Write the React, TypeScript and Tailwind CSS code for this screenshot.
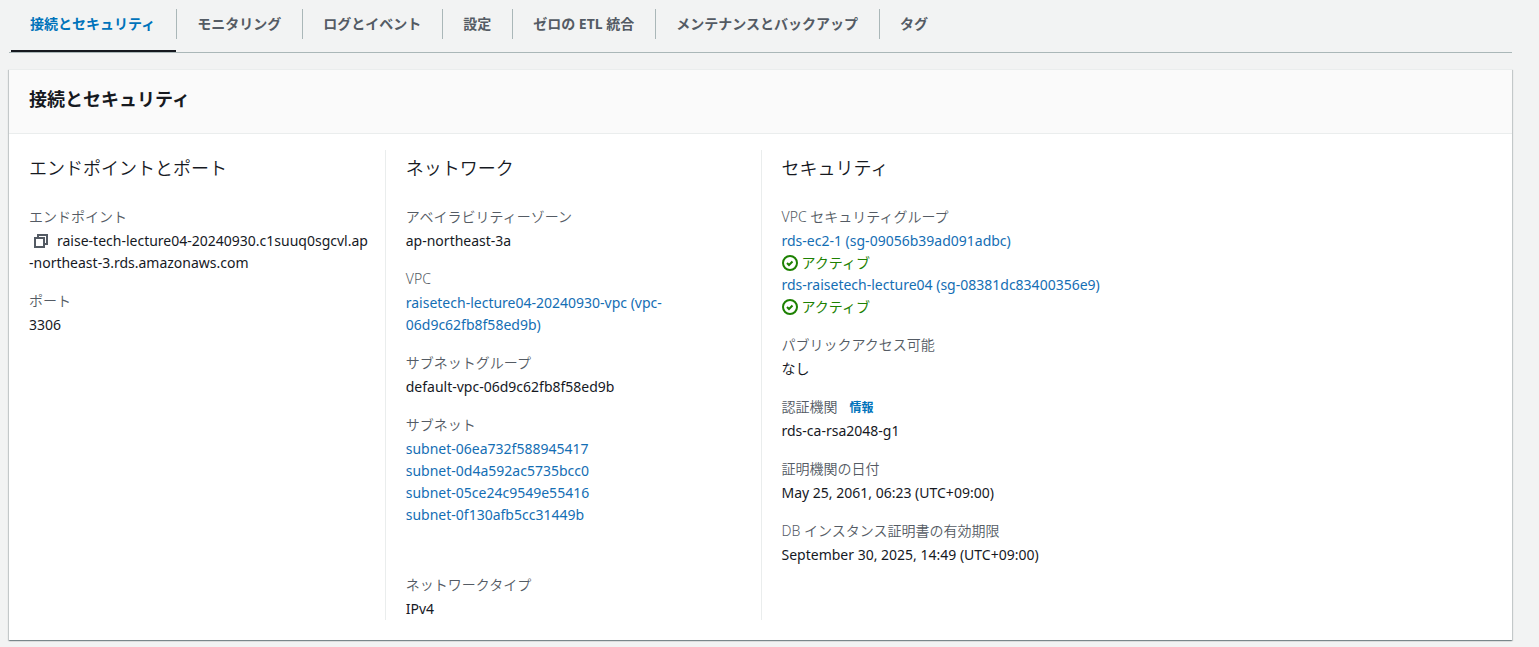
import type { ReactNode } from 'react';

const tabs = [
  '接続とセキュリティ',
  'モニタリング',
  'ログとイベント',
  '設定',
  'ゼロの ETL 統合',
  'メンテナンスとバックアップ',
  'タグ',
];

function CopyIcon() {
  return (
    <svg viewBox="0 0 16 16" className="h-4 w-4" fill="none" stroke="#545b64" strokeWidth="2" aria-hidden="true">
      <path d="M2 5h9v9H2z" />
      <path d="M5 5V2h9v9h-3" />
    </svg>
  );
}

function CheckIcon() {
  return (
    <svg viewBox="0 0 16 16" className="h-4 w-4 shrink-0" fill="none" stroke="#1d8102" strokeWidth="2" aria-hidden="true">
      <circle cx="8" cy="8" r="7" />
      <path d="M5 8l2 2 3.5-3.5" />
    </svg>
  );
}

function Link({ children }: { children: ReactNode }) {
  return (
    <a href="#" className="text-[#146eb4] hover:underline">
      {children}
    </a>
  );
}

function Status() {
  return (
    <div className="flex items-center gap-1 text-[#1d8102]">
      <CheckIcon />
      <span>アクティブ</span>
    </div>
  );
}

function Field({ label, info, children }: { label: string; info?: boolean; children: ReactNode }) {
  return (
    <div>
      <dt className="font-[350] text-[#545b64]">
        {label}
        {info && (
          <a href="#" className="ml-3 text-xs font-bold text-[#0073bb]">
            情報
          </a>
        )}
      </dt>
      <dd className="mt-0.5">{children}</dd>
    </div>
  );
}

function Column({ title, divided, children }: { title: string; divided?: boolean; children: ReactNode }) {
  return (
    <section className={divided ? 'border-l border-[#eaeded] pr-4 pl-5' : 'pr-4 pl-5'}>
      <h3 className="mb-5 text-lg/9 font-[350]">{title}</h3>
      <dl className="flex flex-col gap-4">{children}</dl>
    </section>
  );
}

export default function App() {
  return (
    <div className="min-h-screen bg-[#f2f3f3] pr-[27px] pb-1.5 pl-[9px] font-['Noto_Sans','Noto_Sans_CJK_JP',sans-serif] text-sm/[22px] text-[#16191f]">
      <div role="tablist" className="flex h-[53px] items-start border-b border-[#aab7b8] pt-[9px] pl-px">
        {tabs.map((tab, i) => (
          <button
            key={tab}
            type="button"
            role="tab"
            aria-selected={i === 0}
            className={`relative pr-[21px] pl-5 text-sm/[30px] font-bold whitespace-nowrap ${
              i < tabs.length - 1 ? 'border-r border-[#aab7b8]' : ''
            } ${i === 0 ? 'text-[#0073bb]' : 'text-[#545b64]'}`}
          >
            {tab}
            {i === 0 && <span className="absolute right-0 -bottom-[13px] left-px h-0.5 bg-[#16191f]" />}
          </button>
        ))}
      </div>

      <main className="mt-4 border-t border-[#eaeded] bg-white shadow-[0_1px_1px_0_rgba(0,28,36,0.3),1px_1px_1px_0_rgba(0,28,36,0.15),-1px_1px_1px_0_rgba(0,28,36,0.15)]">
        <header className="border-b border-[#eaeded] bg-[#fafafa] px-5 pt-4 pb-5">
          <h2 className="text-lg/[27px] font-bold">接続とセキュリティ</h2>
        </header>

        <div className="grid grid-cols-4 pt-4 pb-5">
          <Column title="エンドポイントとポート">
            <Field label="エンドポイント">
              <button type="button" aria-label="コピー" className="mr-2 ml-1 inline-flex align-[-3px]">
                <CopyIcon />
              </button>
              <span className="break-all">raise-tech-lecture04-20240930.c1suuq0sgcvl.ap-northeast-3.rds.amazonaws.com</span>
            </Field>
            <Field label="ポート">3306</Field>
          </Column>

          <Column title="ネットワーク" divided>
            <Field label="アベイラビリティーゾーン">ap-northeast-3a</Field>
            <Field label="VPC">
              <Link>raisetech-lecture04-20240930-vpc (vpc-06d9c62fb8f58ed9b)</Link>
            </Field>
            <Field label="サブネットグループ">default-vpc-06d9c62fb8f58ed9b</Field>
            <Field label="サブネット">
              <ul className="pb-8">
                <li><Link>subnet-06ea732f588945417</Link></li>
                <li><Link>subnet-0d4a592ac5735bcc0</Link></li>
                <li><Link>subnet-05ce24c9549e55416</Link></li>
                <li><Link>subnet-0f130afb5cc31449b</Link></li>
              </ul>
            </Field>
            <Field label="ネットワークタイプ">IPv4</Field>
          </Column>

          <Column title="セキュリティ" divided>
            <Field label="VPC セキュリティグループ">
              <Link>rds-ec2-1 (sg-09056b39ad091adbc)</Link>
              <Status />
              <Link>rds-raisetech-lecture04 (sg-08381dc83400356e9)</Link>
              <Status />
            </Field>
            <Field label="パブリックアクセス可能">なし</Field>
            <Field label="認証機関" info>rds-ca-rsa2048-g1</Field>
            <Field label="証明機関の日付">May 25, 2061, 06:23 (UTC+09:00)</Field>
            <Field label="DB インスタンス証明書の有効期限">September 30, 2025, 14:49 (UTC+09:00)</Field>
          </Column>
        </div>
      </main>
    </div>
  );
}
